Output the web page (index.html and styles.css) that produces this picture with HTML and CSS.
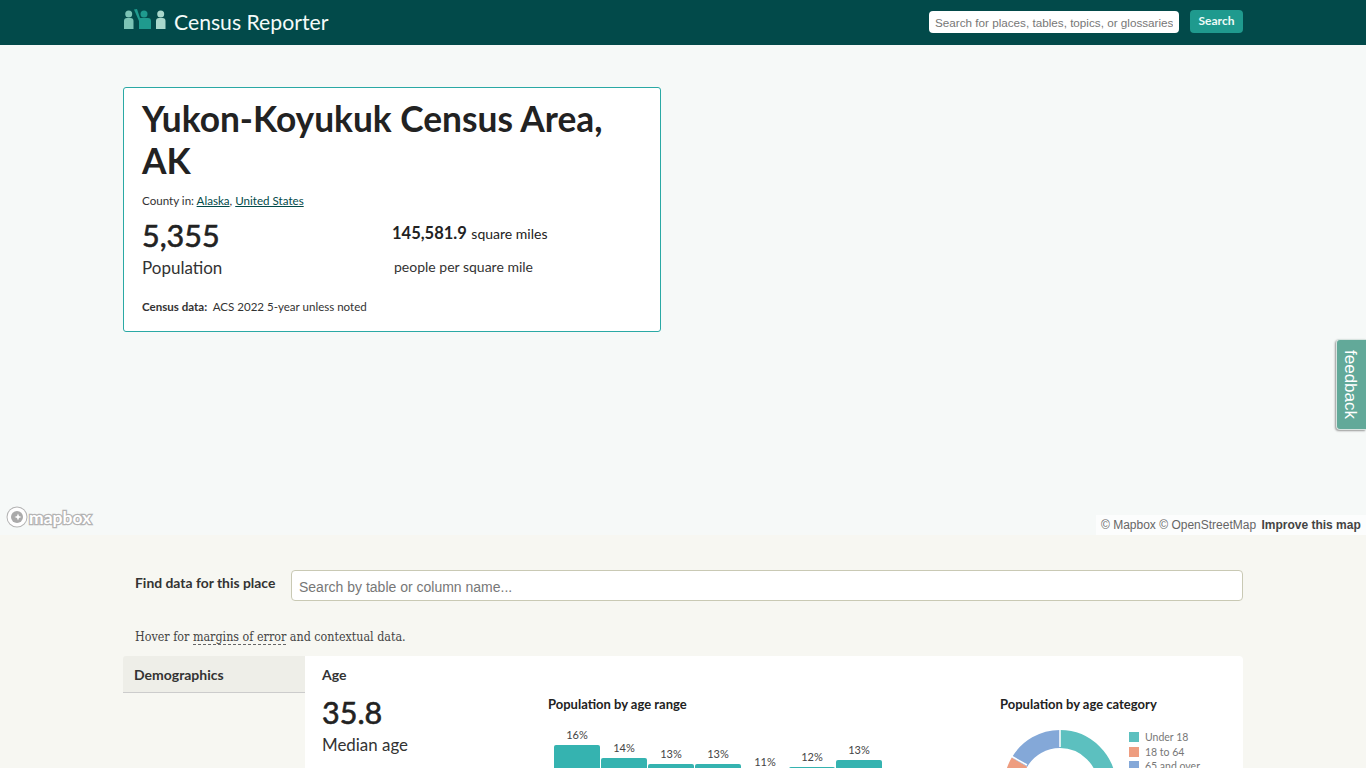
FILE: index.html
```html
<!DOCTYPE html>
<html lang="en">
<head>
    <meta charset="UTF-8">
    <meta name="viewport" content="width=device-width, initial-scale=1.0">
    <title>Census Reporter</title>
    <link rel="stylesheet" href="styles.css">
</head>
<body>
    <div class="header">
        <div class="wrap header-row">
            <a class="brand" href="#">
                <svg class="brand-icon" width="43" height="22" viewBox="0 0 43 22">
                    <circle cx="5.700" cy="6" r="3.500" fill="#7cc4b6"/>
                    <path d="M1 13q0-3 3-3h3.500q3 0 3 3v8H1z" fill="#7cc4b6"/>
                    <circle cx="21" cy="6" r="3.500" fill="#1f9a8e"/>
                    <path d="M11 1.500l3-.5 3 9h8q3 0 3 3v8H16v-8z" fill="#1f9a8e"/>
                    <circle cx="37.700" cy="6" r="3.500" fill="#a9d8cc"/>
                    <path d="M33 13q0-3 3-3h3.500q3 0 3 3v8H33z" fill="#a9d8cc"/>
                </svg>
                <span>Census Reporter</span>
            </a>
            <form class="site-search">
                <input class="site-search-input" type="text" placeholder="Search for places, tables, topics, or glossaries">
                <button class="site-search-btn" type="button">Search</button>
            </form>
        </div>
    </div>

    <div class="map">
        <div class="wrap">
            <div class="place-card">
                <h1>Yukon-Koyukuk Census Area, AK</h1>
                <p class="parents">County in: <a href="#">Alaska</a>, <a href="#">United States</a></p>
                <div class="place-stats">
                    <div class="pop">
                        <div class="pop-value">5,355</div>
                        <div class="pop-name">Population</div>
                    </div>
                    <div class="area">
                        <div class="area-line"><b>145,581.9</b> square miles</div>
                        <div class="density-line">people per square mile</div>
                    </div>
                </div>
                <p class="data-note"><b>Census data:</b> ACS 2022 5-year unless noted</p>
            </div>
        </div>
        <div class="mapbox-logo">
            <svg width="22" height="22" viewBox="0 0 22 22">
                <circle cx="11" cy="11" r="9.500" fill="#fff" stroke="#b4b4b4" stroke-width="2"/>
                <circle cx="11" cy="11" r="6" fill="#aaa"/>
                <path d="M12 7.500l1 2.500 2.500 1-2.500 1-1 2.500-1-2.500-2.500-1 2.500-1z" fill="#fff"/>
            </svg>
            <span>mapbox</span>
        </div>
        <div class="attribution">© Mapbox © OpenStreetMap <b>Improve this map</b></div>
    </div>

    <div class="profile">
        <div class="wrap">
            <div class="finder">
                <label class="finder-label">Find data for this place</label>
                <input class="finder-input" type="text" placeholder="Search by table or column name...">
            </div>
            <p class="hover-note">Hover for <span class="dashed">margins of error</span> and contextual data.</p>
            <div class="section">
                <div class="section-nav"><h2>Demographics</h2></div>
                <div class="section-body">
                    <div class="stat-col">
                        <h3>Age</h3>
                        <div class="stat-value">35.8</div>
                        <div class="stat-name">Median age</div>
                    </div>
                    <div class="bars-col">
                        <h4>Population by age range</h4>
                        <div class="bars">
                            <div class="bar-col"><span>16%</span><div class="bar" style="height:135px"></div></div>
                            <div class="bar-col"><span>14%</span><div class="bar" style="height:122px"></div></div>
                            <div class="bar-col"><span>13%</span><div class="bar" style="height:116px"></div></div>
                            <div class="bar-col"><span>13%</span><div class="bar" style="height:116px"></div></div>
                            <div class="bar-col"><span>11%</span><div class="bar" style="height:108px"></div></div>
                            <div class="bar-col"><span>12%</span><div class="bar" style="height:113px"></div></div>
                            <div class="bar-col"><span>13%</span><div class="bar" style="height:120px"></div></div>
                        </div>
                    </div>
                    <div class="donut-col">
                        <h4>Population by age category</h4>
                        <div class="donut-row">
                            <svg class="donut" width="120" height="120" viewBox="0 0 120 120">
                                <g transform="rotate(-90 60 60)" fill="none" stroke-width="18">
                                    <circle cx="60" cy="60" r="47" pathLength="100" stroke="#5cc0bf" stroke-dasharray="29 71"/>
                                    <circle cx="60" cy="60" r="47" pathLength="100" stroke="#ee9d80" stroke-dasharray="54.500 45.500" stroke-dashoffset="-29"/>
                                    <circle cx="60" cy="60" r="47" pathLength="100" stroke="#84a8d8" stroke-dasharray="16.500 83.500" stroke-dashoffset="-83.500"/>
                                </g>
                                <path d="M60 3v18M11 30l16 9" stroke="#fff" stroke-width="1.500"/>
                            </svg>
                            <ul class="legend">
                                <li><i class="sw-a"></i>Under 18</li>
                                <li><i class="sw-b"></i>18 to 64</li>
                                <li><i class="sw-c"></i>65 and over</li>
                            </ul>
                        </div>
                    </div>
                </div>
            </div>
        </div>
    </div>

    <a class="feedback" href="#">feedback</a>
</body>
</html>
```

FILE: styles.css
```css
html, body {
    margin: 0;
    height: 100vh;
    overflow: hidden;
}
body {
    position: relative;
    font-family: "Lato", sans-serif;
    color: #222;
    background-color: #f7f7f2;
}
.wrap {
    width: 1120px;
    margin-left: 123px;
}

/* header */
.header {
    height: 45px;
    background-color: #024a4a;
}
.header-row {
    display: flex;
    justify-content: space-between;
    height: 45px;
}
.brand {
    display: flex;
    align-items: center;
    gap: 8px;
    padding-bottom: 2px;
    box-sizing: border-box;
    font-size: 21.2px;
    color: #f4fbf9;
    text-decoration: none;
}
.brand-icon {
    margin-top: -5px;
}
.site-search {
    display: flex;
    gap: 11px;
    margin-top: 10px;
}
.site-search-input {
    box-sizing: border-box;
    width: 250px;
    height: 22px;
    margin-top: 1px;
    padding: 0 6px;
    border: 0;
    border-radius: 4px;
    font-family: "Liberation Sans", sans-serif;
    font-size: 11.7px;
    background-color: #fff;
}
.site-search-input::placeholder,
.finder-input::placeholder {
    color: #777;
    opacity: 1;
}
.site-search-btn {
    width: 53px;
    height: 23px;
    padding: 0 0 2px;
    border: 0;
    border-radius: 4px;
    font-family: "Lato", sans-serif;
    font-size: 12px;
    font-weight: 700;
    color: #eefaf7;
    background-color: #1f9a8e;
}

/* map hero */
.map {
    position: relative;
    box-sizing: border-box;
    height: 490px;
    padding-top: 42px;
    background-color: #f6f9f8;
}
.place-card {
    box-sizing: border-box;
    width: 538px;
    height: 245px;
    padding: 10px 18px;
    border: 1px solid #2aa9a5;
    border-radius: 3px;
    background-color: #fff;
}
.place-card h1 {
    margin: 0;
    font-size: 35.300px;
    line-height: 42px;
    font-weight: 700;
    color: #222;
}
.parents {
    margin: 11px 0 0;
    font-size: 11.6px;
    line-height: 15px;
    color: #333;
}
.parents a {
    color: #024a4a;
}
.place-stats {
    display: flex;
    margin-top: 8px;
}
.pop {
    width: 250px;
}
.pop-value {
    font-size: 30.500px;
    line-height: 38px;
    -webkit-text-stroke: 0.6px #222;
}
.pop-name {
    padding-top: 2px;
    font-size: 17px;
    line-height: 24px;
    color: #333;
}
.area-line {
    margin-top: 7px;
    font-size: 14px;
    line-height: 20px;
}
.area-line b {
    font-size: 16.500px;
    margin-right: 1px;
}
.density-line {
    margin: 13px 0 0 2px;
    font-size: 14px;
    line-height: 20px;
    color: #333;
}
.data-note {
    margin: 19px 0 0;
    font-size: 11.550px;
    line-height: 15px;
    color: #333;
}
.data-note b {
    margin-right: 3px;
}
.mapbox-logo {
    position: absolute;
    left: 6px;
    bottom: 7px;
    display: flex;
    align-items: center;
    gap: 1px;
    font-size: 17.500px;
    font-weight: 700;
    color: #fff;
    -webkit-text-stroke: 2.5px #b4b4b4;
    paint-order: stroke fill;
}
.attribution {
    position: absolute;
    right: 0;
    bottom: 0;
    box-sizing: border-box;
    width: 270px;
    height: 20px;
    padding: 3px 5px;
    font-family: "Liberation Sans", sans-serif;
    font-size: 12px;
    line-height: 14px;
    white-space: nowrap;
    color: #666;
    background-color: rgba(255, 255, 255, 0.7);
}
.attribution b {
    margin-left: 2px;
    color: #444;
}

/* profile */
.profile {
    padding-top: 35px;
}
.finder {
    display: flex;
    align-items: center;
}
.finder-label {
    width: 168px;
    padding-left: 12px;
    box-sizing: border-box;
    margin-top: -7px;
    font-size: 13.900px;
    font-weight: 700;
    color: #333;
}
.finder-input {
    box-sizing: border-box;
    width: 952px;
    height: 31px;
    padding: 2px 7px 0;
    border: 1px solid #c9c9b4;
    border-radius: 4px;
    font-family: "Liberation Sans", sans-serif;
    font-size: 14px;
    background-color: #fff;
}
.hover-note {
    margin: 28px 0 0 12px;
    font-family: "DejaVu Serif Condensed", "DejaVu Serif", serif;
    font-size: 12.400px;
    line-height: 16px;
    color: #444;
}
.dashed {
    border-bottom: 1px dashed #666;
}
.section {
    display: flex;
    margin-top: 11px;
}
.section-nav {
    flex: none;
    width: 182px;
}
.section-nav h2 {
    margin: 0;
    box-sizing: border-box;
    height: 37px;
    padding: 10px 11px 0;
    font-size: 14px;
    line-height: 18px;
    font-weight: 700;
    color: #333;
    background-color: #eeeee8;
    border-bottom: 1px solid #ccc;
    border-radius: 3px 0 0 0;
}
.section-body {
    flex: 1;
    display: flex;
    height: 400px;
    background-color: #fff;
    border-radius: 0 4px 0 0;
}
.stat-col {
    width: 226px;
    padding-left: 17px;
    flex: none;
}
.stat-col h3 {
    margin: 10px 0 0;
    font-size: 14px;
    line-height: 18px;
    font-weight: 700;
    color: #333;
}
.stat-value {
    margin-top: 9px;
    font-size: 30.500px;
    line-height: 38px;
    -webkit-text-stroke: 0.6px #222;
}
.stat-name {
    padding-top: 2px;
    font-size: 16.900px;
    line-height: 24px;
    color: #333;
}
.bars-col {
    width: 452px;
    flex: none;
}
.bars-col h4,
.donut-col h4 {
    margin: 40px 0 0;
    font-size: 13px;
    line-height: 16px;
    font-weight: 700;
    color: #222;
}
.bars {
    display: flex;
    align-items: flex-end;
    gap: 1px;
    height: 168px;
    margin-left: 6px;
}
.bar-col {
    width: 46px;
    text-align: center;
    font-size: 11px;
    line-height: 14px;
    color: #444;
}
.bar-col span {
    display: block;
    margin-bottom: 3px;
}
.bar {
    background-color: #35b3b0;
    border-radius: 2px 2px 0 0;
}
.donut-row {
    display: flex;
    margin-top: 16px;
}
.donut {
    flex: none;
    margin: -2px 9px 0 0;
}
.legend {
    margin: 2px 0 0;
    padding: 0;
    list-style: none;
    font-size: 10.500px;
    line-height: 14.600px;
    color: #777;
}
.legend li {
    display: flex;
    align-items: center;
    gap: 6px;
}
.legend i {
    width: 10px;
    height: 10px;
}
.sw-a { background-color: #5cc0bf; }
.sw-b { background-color: #ee9d80; }
.sw-c { background-color: #84a8d8; }

/* feedback tab */
.feedback {
    position: absolute;
    top: 339px;
    right: 0;
    box-sizing: border-box;
    width: 30px;
    height: 91px;
    padding: 10px 7px 0 0;
    writing-mode: vertical-rl;
    font-family: "Liberation Sans", sans-serif;
    font-size: 17px;
    line-height: 18px;
    color: #fff;
    text-decoration: none;
    background-color: #62a999;
    border: 1px solid #d8e4e0;
    border-right: 0;
    border-radius: 4px 0 0 4px;
    box-shadow: -1px 1px 2px #999;
}
```
